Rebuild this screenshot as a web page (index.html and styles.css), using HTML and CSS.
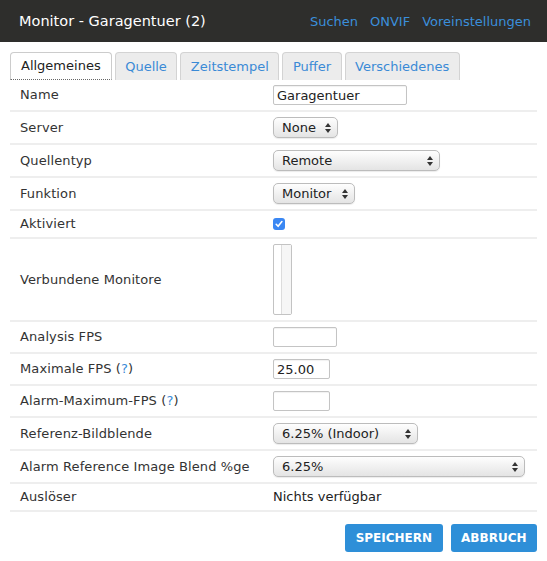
FILE: index.html
```html
<!DOCTYPE html>
<html lang="de">
<head>
<meta charset="utf-8">
<title>Monitor - Garagentuer (2)</title>
<link rel="stylesheet" href="styles.css">
</head>
<body>
<header class="topbar">
  <h1 class="title">Monitor - Garagentuer (2)</h1>
  <nav class="toplinks">
    <a href="#">Suchen</a>
    <a href="#">ONVIF</a>
    <a href="#">Voreinstellungen</a>
  </nav>
</header>
<main class="content">
  <ul class="tabs">
    <li class="tab active"><a href="#">Allgemeines</a></li>
    <li class="tab"><a href="#">Quelle</a></li>
    <li class="tab"><a href="#">Zeitstempel</a></li>
    <li class="tab"><a href="#">Puffer</a></li>
    <li class="tab"><a href="#">Verschiedenes</a></li>
  </ul>
  <div class="form">
    <div class="row">
      <div class="label">Name</div>
      <div class="value"><input class="text w-name" type="text" value="Garagentuer"></div>
    </div>
    <div class="row">
      <div class="label">Server</div>
      <div class="value"><span class="select"><select class="w-server"><option>None</option></select><svg width="6" height="10" viewBox="0 0 6 10"><path d="M0 4 L3 0 L6 4 Z M0 6 L6 6 L3 10 Z" fill="#333"/></svg></span></div>
    </div>
    <div class="row">
      <div class="label">Quellentyp</div>
      <div class="value"><span class="select"><select class="w-remote"><option>Remote</option></select><svg width="6" height="10" viewBox="0 0 6 10"><path d="M0 4 L3 0 L6 4 Z M0 6 L6 6 L3 10 Z" fill="#333"/></svg></span></div>
    </div>
    <div class="row">
      <div class="label">Funktion</div>
      <div class="value"><span class="select"><select class="w-monitor"><option>Monitor</option></select><svg width="6" height="10" viewBox="0 0 6 10"><path d="M0 4 L3 0 L6 4 Z M0 6 L6 6 L3 10 Z" fill="#333"/></svg></span></div>
    </div>
    <div class="row row-text">
      <div class="label">Aktiviert</div>
      <div class="value"><span class="check"><svg width="12" height="12" viewBox="0 0 12 12"><path d="M3.2 6.3 L5.1 8.3 L8.9 3.6" fill="none" stroke="#fff" stroke-width="1.6" stroke-linecap="round" stroke-linejoin="round"/></svg></span></div>
    </div>
    <div class="row">
      <div class="label">Verbundene Monitore</div>
      <div class="value"><div class="listbox"><div class="track"></div></div></div>
    </div>
    <div class="row">
      <div class="label">Analysis FPS</div>
      <div class="value"><input class="text w-analysis" type="text" value=""></div>
    </div>
    <div class="row">
      <div class="label">Maximale FPS (<a class="help" href="#">?</a>)</div>
      <div class="value"><input class="text w-fps" type="text" value="25.00"></div>
    </div>
    <div class="row">
      <div class="label">Alarm-Maximum-FPS (<a class="help" href="#">?</a>)</div>
      <div class="value"><input class="text w-fps" type="text" value=""></div>
    </div>
    <div class="row">
      <div class="label">Referenz-Bildblende</div>
      <div class="value"><span class="select"><select class="w-blend"><option>6.25% (Indoor)</option></select><svg width="6" height="10" viewBox="0 0 6 10"><path d="M0 4 L3 0 L6 4 Z M0 6 L6 6 L3 10 Z" fill="#333"/></svg></span></div>
    </div>
    <div class="row">
      <div class="label">Alarm Reference Image Blend %ge</div>
      <div class="value"><span class="select"><select class="w-alarmblend"><option>6.25%</option></select><svg width="6" height="10" viewBox="0 0 6 10"><path d="M0 4 L3 0 L6 4 Z M0 6 L6 6 L3 10 Z" fill="#333"/></svg></span></div>
    </div>
    <div class="row row-text">
      <div class="label">Auslöser</div>
      <div class="value">Nichts verfügbar</div>
    </div>
  </div>
  <div class="actions">
    <button class="btn" type="button">SPEICHERN</button>
    <button class="btn" type="button">ABBRUCH</button>
  </div>
</main>
</body>
</html>
```
FILE: styles.css
```css
body {
  margin: 0;
  font-family: "DejaVu Sans", Verdana, sans-serif;
  font-size: 13px;
  color: #333;
  background: #fff;
}

.topbar {
  height: 42px;
  background: #2e2e2c;
  display: flex;
  align-items: center;
  justify-content: space-between;
  padding: 0 16px 0 19px;
}

.title {
  margin: 0;
  font-size: 14.5px;
  font-weight: normal;
  color: #fff;
}

.toplinks {
  display: flex;
  gap: 12px;
}

.toplinks a {
  color: #3b8fdb;
  text-decoration: none;
  font-size: 13px;
}

.content {
  padding: 10px 10px 0;
}

.tabs {
  list-style: none;
  margin: 0;
  padding: 0;
  display: flex;
  gap: 3px;
}

.tab a {
  display: block;
  height: 27px;
  line-height: 27px;
  padding: 0 9.5px;
  border: 1px solid #d3d3d3;
  border-bottom: none;
  border-radius: 4px 4px 0 0;
  background: #ececec;
  color: #3a8ad6;
  text-decoration: none;
}

.tab.active a {
  height: 26px;
  line-height: 26px;
  padding: 0 10px;
  background: #fff;
  color: #222;
  border-color: #cccccc;
  border-bottom: 1px dotted #666;
}

.row {
  display: grid;
  grid-template-columns: 253px 1fr;
  align-items: center;
  padding: 5px 10px;
  border-bottom: 2px solid #eeeeee;
  line-height: 16px;
}

.label {
  color: #333;
  letter-spacing: 0.1px;
}

.value {
  display: flex;
  align-items: center;
  color: #222;
}

.help {
  color: #3a8ad6;
  text-decoration: none;
}

.text {
  box-sizing: border-box;
  height: 20px;
  border: 1px solid #c4c4c4;
  border-radius: 2px;
  padding: 0 3px;
  margin: 0;
  font: inherit;
  color: #222;
  box-shadow: inset 0 1px 1px rgba(0, 0, 0, 0.06);
}

.w-name { width: 134px; }
.w-analysis { width: 64px; }
.w-fps { width: 57px; }

.select {
  position: relative;
  display: inline-block;
  height: 21px;
}

.select select {
  appearance: none;
  -webkit-appearance: none;
  box-sizing: border-box;
  height: 21px;
  margin: 0;
  border: 1px solid #bcbcbc;
  border-radius: 5px;
  background: linear-gradient(#fefefe, #e4e4e4);
  box-shadow: 0 1px 1px rgba(0, 0, 0, 0.08);
  font: inherit;
  color: #222;
  padding: 0 0 0 8px;
}

.select svg {
  position: absolute;
  right: 7px;
  top: 6px;
  pointer-events: none;
}

.w-server { width: 65px; }
.w-remote { width: 167px; }
.w-monitor { width: 82px; }
.w-blend { width: 145px; }
.w-alarmblend { width: 252px; }

.check {
  display: block;
  width: 12px;
  height: 12px;
  border-radius: 3px;
  background: #3a87f3;
}

.check svg {
  display: block;
}

.listbox {
  box-sizing: border-box;
  width: 19px;
  height: 71px;
  border: 1px solid #c3c3c3;
  border-radius: 2px;
  background: #fff;
  display: flex;
  justify-content: flex-end;
}

.track {
  width: 9px;
  border-left: 1px solid #dcdcdc;
  background: #f6f6f6;
}

.actions {
  display: flex;
  justify-content: flex-end;
  gap: 8px;
  margin-top: 12px;
}

.btn {
  height: 28px;
  padding: 0 10.5px;
  border: none;
  border-radius: 3px;
  background: #2e8fd8;
  color: #fff;
  font-family: "DejaVu Sans", Verdana, sans-serif;
  font-weight: bold;
  font-size: 12px;
}
```
